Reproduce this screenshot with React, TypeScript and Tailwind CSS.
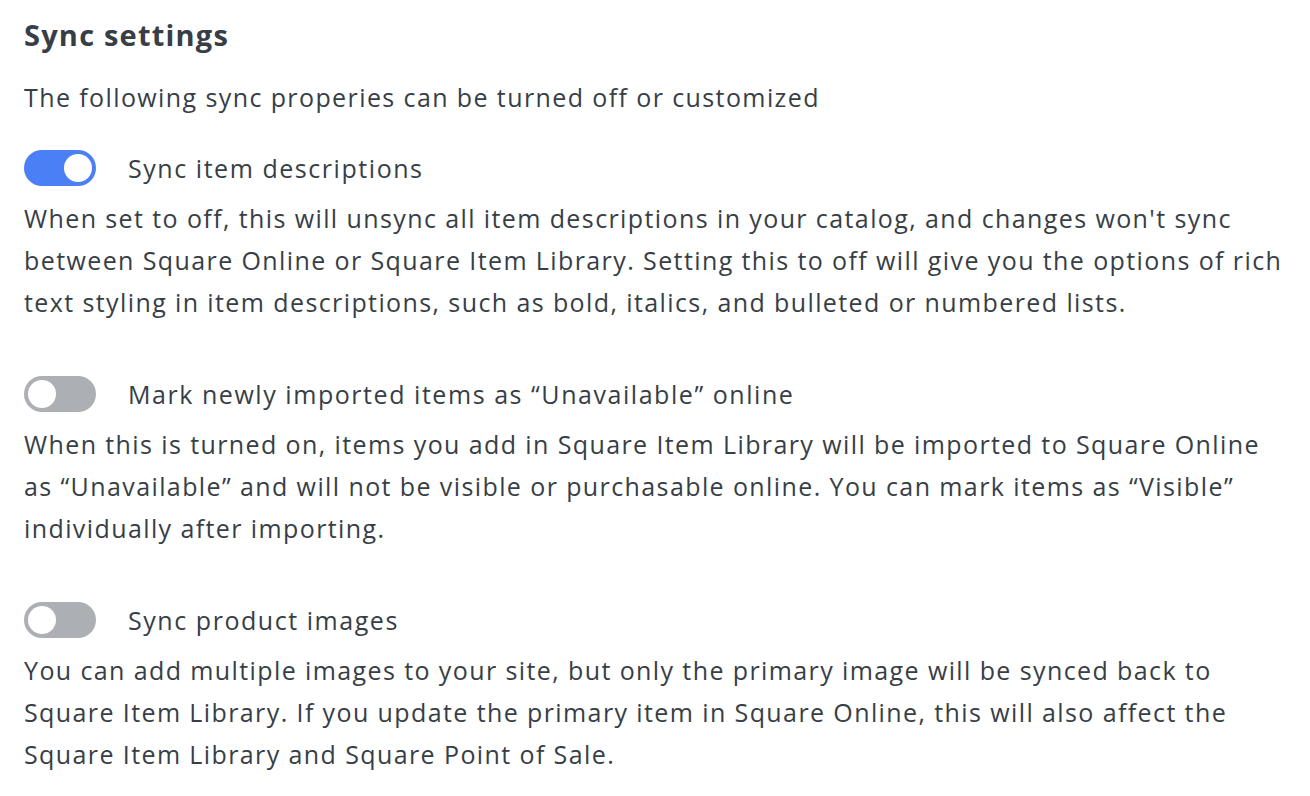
import { useState } from "react"

type Setting = {
  id: string
  label: string
  description: string
  enabled: boolean
}

const initialSettings: Setting[] = [
  {
    id: "descriptions",
    label: "Sync item descriptions",
    description:
      "When set to off, this will unsync all item descriptions in your catalog, and changes won't sync between Square Online or Square Item Library. Setting this to off will give you the options of rich text styling in item descriptions, such as bold, italics, and bulleted or numbered lists.",
    enabled: true,
  },
  {
    id: "unavailable",
    label: "Mark newly imported items as \u201cUnavailable\u201d online",
    description:
      "When this is turned on, items you add in Square Item Library will be imported to Square Online as \u201cUnavailable\u201d and will not be visible or purchasable online. You can mark items as \u201cVisible\u201d individually after importing.",
    enabled: false,
  },
  {
    id: "images",
    label: "Sync product images",
    description:
      "You can add multiple images to your site, but only the primary image will be synced back to Square Item Library. If you update the primary item in Square Online, this will also affect the Square Item Library and Square Point of Sale.",
    enabled: false,
  },
]

function Toggle({ on, onClick }: { on: boolean; onClick: () => void }) {
  return (
    <button
      onClick={onClick}
      className={`relative w-[72px] h-[36px] rounded-full flex-shrink-0 ${on ? "bg-[#4a7ff5]" : "bg-[#acafb3]"}`}
    >
      <span
        className={`absolute top-[4px] w-[28px] h-[28px] rounded-full bg-white ${on ? "left-[40px]" : "left-[4px]"}`}
      />
    </button>
  )
}

export default function App() {
  const [settings, setSettings] = useState(initialSettings)

  const flip = (id: string) =>
    setSettings((prev) => prev.map((s) => (s.id === id ? { ...s, enabled: !s.enabled } : s)))

  return (
    <div className="bg-white min-h-screen w-[1310px] px-[24px] pt-[14px] text-[#373e46] tracking-[1.4px] font-['Open_Sans','Liberation_Sans',sans-serif]">
      <h2 className="text-[29px] font-bold leading-[42px] tracking-[1.2px]">Sync settings</h2>
      <p className="text-[25px] leading-[42px] mt-[20px]">
        The following sync properies can be turned off or customized
      </p>

      <div className="mt-[32px] flex flex-col gap-[53px] w-[1262px]">
        {settings.map((s) => (
          <div key={s.id}>
            {/* Toggle row */}
            <div className="flex items-center gap-[32px] h-[36px]">
              <Toggle on={s.enabled} onClick={() => flip(s.id)} />
              <span className="text-[25px] leading-[42px] tracking-[1.55px]">{s.label}</span>
            </div>
            <p className="text-[25px] leading-[42px] mt-[11px]">{s.description}</p>
          </div>
        ))}
      </div>
    </div>
  )
}
